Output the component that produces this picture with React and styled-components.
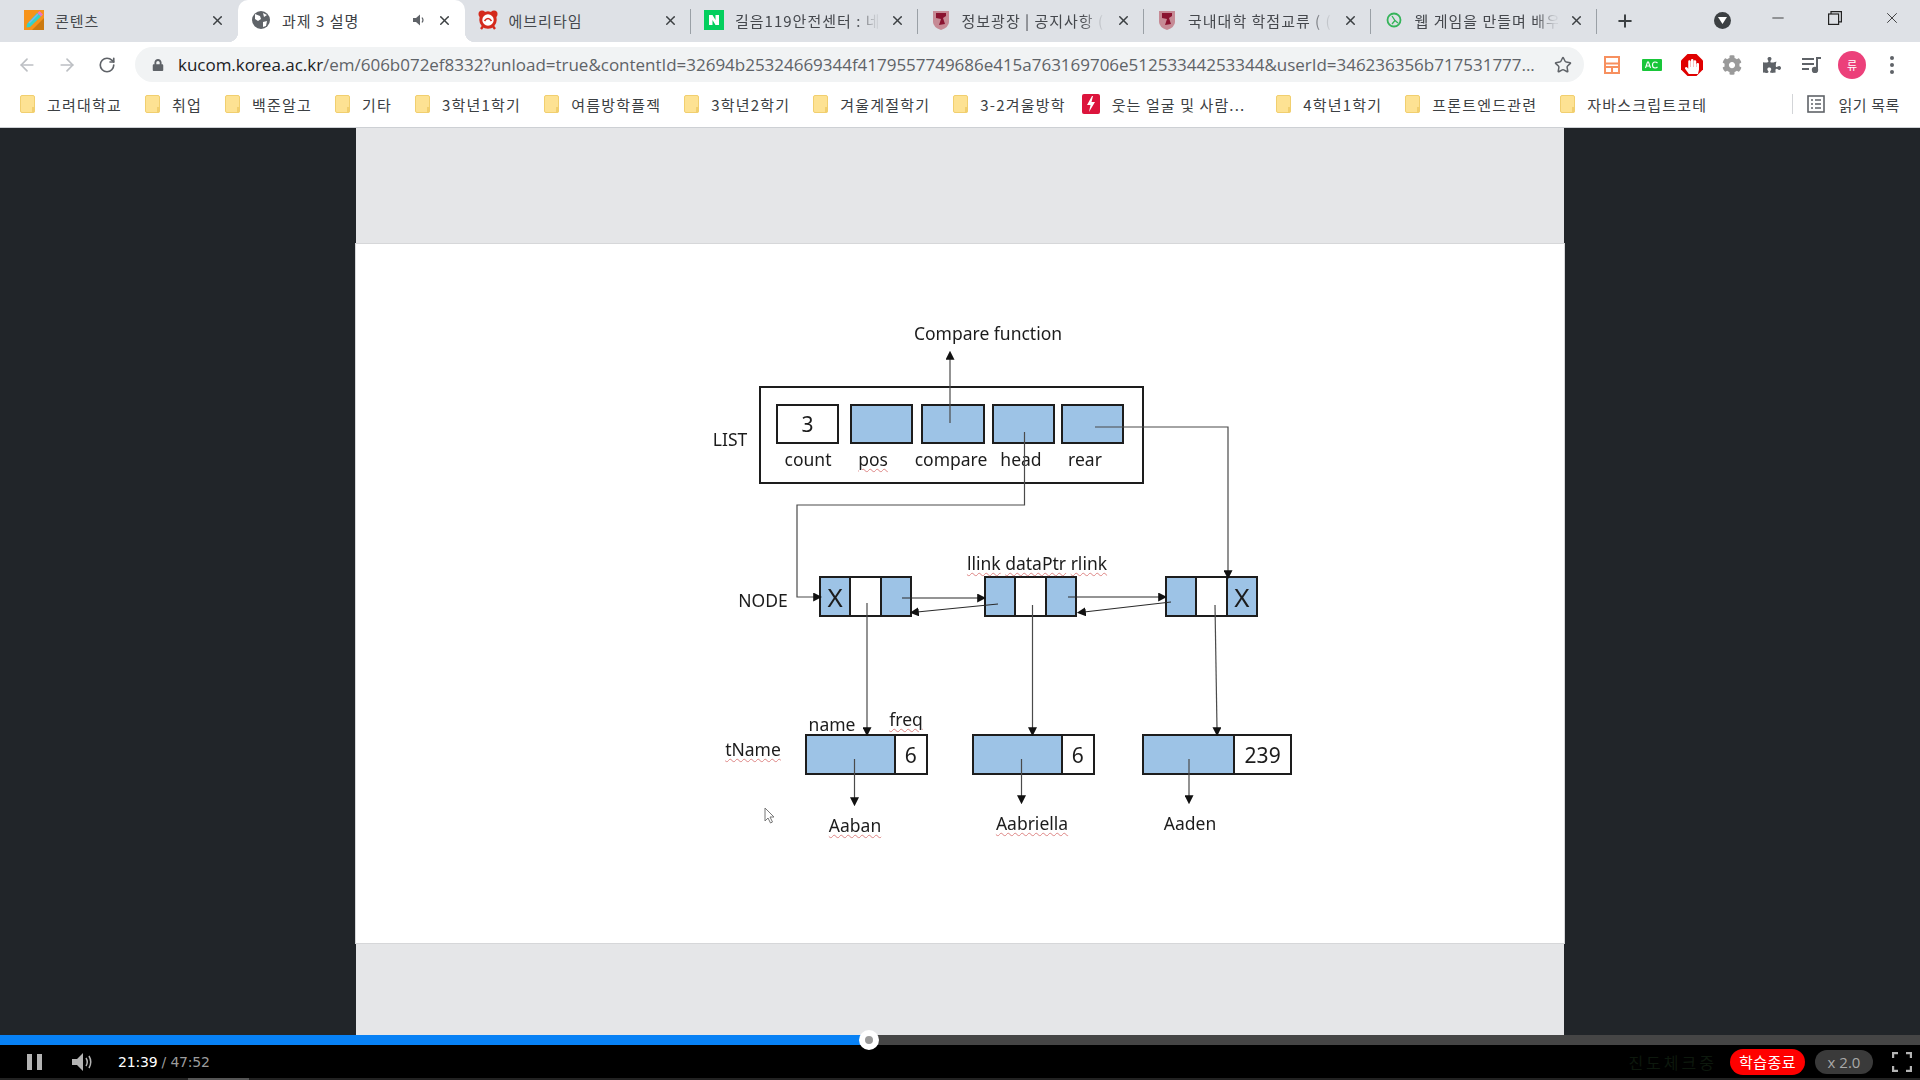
import React from 'react';
import styled, { createGlobalStyle } from 'styled-components';
import { ArrowLeft, ArrowRight, RotateCw, Star, X, Plus, Minus } from 'lucide-react';
import { FaLock, FaPuzzlePiece, FaCog, FaHandPaper } from 'react-icons/fa';

const SLIDE_X = 356;
const SLIDE_Y = 244;

const GlobalStyle = createGlobalStyle`
    html, body {
        margin: 0;
        padding: 0;
        background: #212529;
    }
    * {
        box-sizing: border-box;
    }
`;

const Page = styled.div`
    width: 1920px;
    height: 1080px;
    display: flex;
    flex-direction: column;
    overflow: hidden;
    font-family: "Noto Sans CJK KR", "Noto Sans", sans-serif;
`;

/* browser chrome */
const TabStrip = styled.div`
    height: 42px;
    flex: none;
    display: flex;
    align-items: stretch;
    padding-left: 11px;
    background: #dee1e6;
`;
const Tab = styled.div`
    position: relative;
    width: ${(p) => (p.$first ? 227 : 226.5)}px;
    display: flex;
    align-items: center;
    padding: 0 12px 2px 13px;
    gap: 11px;
    color: ${(p) => (p.$active ? '#3c4043' : '#45484d')};
    background: ${(p) => (p.$active ? '#fff' : 'transparent')};
    border-radius: ${(p) => (p.$active ? '10px 10px 0 0' : '0')};
    &::after {
        content: '';
        display: ${(p) => (p.$sep ? 'block' : 'none')};
        position: absolute;
        right: 0;
        top: 9px;
        width: 1px;
        height: 25px;
        background: #9aa0a6;
    }
    &::before {
        content: '';
        display: ${(p) => (p.$active ? 'block' : 'none')};
        position: absolute;
        left: -10px;
        right: -10px;
        bottom: 0;
        height: 10px;
        background:
            radial-gradient(circle at 0 0, #dee1e6 10px, #fff 10.5px) left / 10px 10px no-repeat,
            radial-gradient(circle at 100% 0, #dee1e6 10px, #fff 10.5px) right / 10px 10px no-repeat;
    }
`;
const Favicon = styled.span`
    width: 20px;
    height: 20px;
    flex: none;
    display: flex;
    align-items: center;
    justify-content: center;
`;
const TabTitle = styled.span`
    flex: 1;
    min-width: 0;
    overflow: hidden;
    white-space: nowrap;
    font-size: 15px;
    letter-spacing: 1px;
    mask-image: ${(p) => (p.$fade ? 'linear-gradient(to right, #000 84%, rgba(0,0,0,0.1) 98%)' : 'none')};
`;
const TabClose = styled.span`
    flex: none;
    display: flex;
    color: #3c4043;
    margin-right: 1px;
`;
const Speaker = styled.span`
    flex: none;
    display: flex;
`;
const NewTab = styled.span`
    margin-left: 18px;
    width: 20px;
    display: flex;
    align-items: center;
    color: #3c4043;
`;
const WindowControls = styled.div`
    margin-left: auto;
    display: flex;
    align-items: flex-start;
`;
const ProfileDot = styled.span`
    width: 17px;
    height: 17px;
    margin: 12px 18.5px 0 0;
    border-radius: 50%;
    background: #3c4043;
    display: flex;
    align-items: center;
    justify-content: center;
`;
const WindowButton = styled.span`
    width: 57px;
    height: 36px;
    display: flex;
    align-items: center;
    justify-content: center;
    color: #222;
`;

const Toolbar = styled.div`
    height: 45px;
    flex: none;
    display: flex;
    align-items: center;
    padding-left: 7px;
    background: #fff;
`;
const NavButton = styled.span`
    width: 40px;
    display: flex;
    justify-content: center;
    color: ${(p) => (p.$on ? '#5f6368' : '#bcbfc3')};
`;
const Omnibox = styled.div`
    width: 1449px;
    height: 35px;
    margin: 0 8px;
    display: flex;
    align-items: center;
    padding: 0 12px 0 17px;
    gap: 14px;
    border-radius: 18px;
    background: #f1f3f4;
    color: #5f6368;
`;
const Url = styled.div`
    flex: 1;
    min-width: 0;
    font-family: "Open Sans", sans-serif;
    font-size: 17px;
    letter-spacing: -0.02px;
    white-space: nowrap;
    overflow: hidden;
    color: #5f6368;
    b {
        font-weight: 400;
        color: #202124;
    }
`;
const ExtButton = styled.span`
    width: 40px;
    display: flex;
    justify-content: center;
    align-items: center;
    color: #5f6368;
`;
const Avatar = styled.span`
    width: 28px;
    height: 28px;
    border-radius: 50%;
    background: #ec407a;
    color: #fff;
    font-size: 11px;
    display: flex;
    align-items: center;
    justify-content: center;
`;

const BookmarkBar = styled.div`
    height: 41px;
    flex: none;
    display: flex;
    align-items: center;
    padding: 0 20px 6px;
    gap: 23px;
    background: #fff;
    border-bottom: 1px solid #cdd0d4;
`;
const Bookmark = styled.div`
    display: flex;
    align-items: center;
    gap: 12px;
    font-size: 15px;
    letter-spacing: 1.2px;
    color: #3c4043;
    white-space: nowrap;
`;
const AppBookmark = styled(Bookmark)`
    margin: 0 8px 0 -7px;
    letter-spacing: 1.1px;
`;
const ReadingList = styled(Bookmark)`
    margin-left: auto;
    height: 20px;
    gap: 13px;
    padding-left: 14px;
    border-left: 1px solid #d3d5d8;
    letter-spacing: 0.6px;
`;

/* player area */
const Stage = styled.div`
    flex: 1;
    min-height: 0;
    display: flex;
    justify-content: center;
    background: #212529;
`;
const Slide = styled.div`
    width: 1208px;
    display: flex;
    flex-direction: column;
    background: #e5e6e8;
`;
const SlideCanvas = styled.div`
    position: relative;
    height: 699px;
    margin-top: 116px;
    background: #fff;
    box-shadow: 0 0 0 1px #d6d7d9;
    color: #1c1c1c;
    font-family: "Noto Sans", sans-serif;
    font-size: 17.5px;
    filter: blur(0.3px);
`;
const Struct = styled.div`
    position: absolute;
    left: ${(p) => p.$x - SLIDE_X}px;
    top: ${(p) => p.$y - SLIDE_Y}px;
    width: ${(p) => p.$w}px;
    height: ${(p) => p.$h}px;
    display: flex;
    border: 2px solid #1d1d1d;
    background: #fff;
`;
const Frame = styled(Struct)`
    background: transparent;
`;
const Cell = styled.div`
    flex: ${(p) => p.$w} 0 0;
    display: flex;
    align-items: center;
    justify-content: center;
    font-size: ${(p) => p.$size || 21}px;
    background: ${(p) => (p.$blue ? '#9dc3e6' : '#fff')};
    & + & {
        border-left: 2px solid #1d1d1d;
    }
`;
const Label = styled.span`
    position: absolute;
    left: ${(p) => p.$x - SLIDE_X}px;
    top: ${(p) => p.$y - SLIDE_Y}px;
    transform: translate(-50%, -50%);
    white-space: nowrap;
    line-height: 1.2;
`;
const Spell = styled.span`
    text-decoration: underline wavy #dd8584 1px;
    text-underline-offset: 2px;
`;
const Wires = styled.svg`
    position: absolute;
    inset: 0;
    width: 100%;
    height: 100%;
    pointer-events: none;
`;
const Cursor = styled.svg`
    position: absolute;
    left: ${764 - SLIDE_X}px;
    top: ${807 - SLIDE_Y}px;
`;

const Progress = styled.div`
    position: relative;
    height: 10px;
    flex: none;
    background: #454545;
`;
const ProgressFill = styled.div`
    height: 100%;
    background: #0781f5;
`;
const Thumb = styled.span`
    position: absolute;
    top: -5px;
    width: 20px;
    height: 20px;
    margin-left: -10px;
    border: 6px solid #fff;
    border-radius: 50%;
    background: #9a9a9a;
`;
const Controls = styled.div`
    height: 33px;
    flex: none;
    display: flex;
    align-items: center;
    padding: 0 8px 0 27px;
    background: #000;
`;
const PauseBars = styled.span`
    display: flex;
    gap: 5px;
    i {
        width: 5px;
        height: 16px;
        background: #b4b4b4;
    }
`;
const VolumeIcon = styled.svg`
    margin-left: 30px;
`;
const TimeText = styled.span`
    margin-left: 24px;
    font-family: "DejaVu Sans", sans-serif;
    font-size: 14px;
    letter-spacing: -0.2px;
    color: #9c9c9c;
    b {
        font-weight: 400;
        color: #fff;
    }
`;
const GhostStatus = styled.span`
    margin-left: auto;
    font-size: 16px;
    letter-spacing: 3px;
    color: #0d180d;
`;
const FinishButton = styled.span`
    margin-left: 13px;
    width: 75px;
    height: 26px;
    border-radius: 13px;
    background: #f00;
    color: #fff;
    font-size: 15px;
    letter-spacing: 0.4px;
    display: flex;
    align-items: center;
    justify-content: center;
`;
const SpeedButton = styled.span`
    margin-left: 10px;
    width: 58px;
    height: 24px;
    border-radius: 12px;
    background: #3a3a3a;
    color: #a8a8a8;
    font-family: "Open Sans", sans-serif;
    font-size: 15px;
    display: flex;
    align-items: center;
    justify-content: center;
`;
const FullscreenIcon = styled.svg`
    margin-left: 19px;
    margin-right: 0;
`;
const BottomStrip = styled.div`
    height: 2px;
    flex: none;
    background: #222;
    padding-left: 188px;
    i {
        display: block;
        width: 61px;
        height: 2px;
        background: #555;
    }
`;

const PencilIcon = () => (
    <svg width="20" height="20" viewBox="0 0 20 20">
        <rect width="20" height="20" fill="#f7931a" />
        <path d="M0 20 L20 20 L20 8 L8 20Z" fill="#cc7a10" />
        <path d="M3 14 L13 3 L17 6.5 L6 17 L2.5 17.5Z" fill="#35d3c8" />
        <path d="M5 13 L14 4" stroke="#7ab6f5" strokeWidth="1.5" />
        <path d="M13.5 3 L15.5 1 L19 4.5 L17 6.5Z" fill="#e676c8" />
    </svg>
);
const GlobeIcon = () => (
    <svg width="18" height="18" viewBox="0 0 18 18">
        <circle cx="9" cy="9" r="9" fill="#5f6368" />
        <path d="M3 3 L8 5 L9 8 L6 10 L3 8Z M11 11 L15 10 L14 15 L11 16Z M11 2 L15 4 L12 6Z" fill="#fff" />
    </svg>
);
const AlarmIcon = () => (
    <svg width="20" height="20" viewBox="0 0 20 20">
        <circle cx="4" cy="4" r="3.5" fill="#d42a1c" />
        <circle cx="16" cy="4" r="3.5" fill="#d42a1c" />
        <path d="M3 19 L6 15 M17 19 L14 15" stroke="#d42a1c" strokeWidth="2.4" />
        <circle cx="10" cy="10" r="7.2" fill="#fff" stroke="#d42a1c" strokeWidth="3" />
        <path d="M6.5 11 Q10 6 13.5 11" fill="none" stroke="#d42a1c" strokeWidth="1.6" />
    </svg>
);
const NaverIcon = () => (
    <svg width="20" height="20" viewBox="0 0 20 20">
        <rect width="20" height="20" fill="#03cf5d" />
        <path d="M5 5 H8.5 L11.5 10 V5 H15 V15 H11.5 L8.5 10 V15 H5Z" fill="#fff" />
    </svg>
);
const CrestIcon = () => (
    <svg width="18" height="20" viewBox="0 0 18 20">
        <path d="M1 1 H17 V12 Q17 17 9 20 Q1 17 1 12Z" fill="#c68a95" />
        <path d="M4 3 H14 V6 L11 8 L13 14 L7 15 L9 9 L4 8Z" fill="#8a1330" />
    </svg>
);
const GameIcon = () => (
    <svg width="16" height="16" viewBox="0 0 16 16">
        <circle cx="8" cy="8" r="6.5" fill="none" stroke="#35b45a" strokeWidth="1.8" />
        <path d="M6 4 L9 8.5 L12 11 M6 12 L9 8.5" fill="none" stroke="#35b45a" strokeWidth="1.3" />
    </svg>
);
const FolderIcon = () => (
    <svg width="15" height="18" viewBox="0 0 15 18">
        <rect x="0.5" y="0.5" width="14" height="17" rx="1.5" fill="#fde293" stroke="#f1cf6f" />
        <path d="M12 12 h2.5 v5.5 h-2.5z" fill="#f1cf6f" />
    </svg>
);
const BoltIcon = () => (
    <svg width="18" height="20" viewBox="0 0 18 20">
        <rect width="18" height="20" rx="2" fill="#dc143c" />
        <path d="M10 2 L5 11 H8.5 L7 18 L13 8 H9.5 L11 2Z" fill="#fff" />
    </svg>
);
const LayoutIcon = () => (
    <svg width="16" height="18" viewBox="0 0 16 18">
        <rect x="1" y="1" width="14" height="16" fill="none" stroke="#f7905f" strokeWidth="2" />
        <path d="M1 7.5 H15 M1 11 H15 M8 11 V17" stroke="#f7905f" strokeWidth="2" />
    </svg>
);
const AcIcon = () => (
    <svg width="20" height="12" viewBox="0 0 20 12">
        <rect width="20" height="12" rx="1" fill="#18c639" />
        <path d="M3.5 9 L5.5 3 H6.5 L8.5 9 M4.5 7 H7.5 M15.5 4 Q14.5 3 13 3 Q10.5 3 10.5 6 Q10.5 9 13 9 Q14.5 9 15.5 8" fill="none" stroke="#fff" strokeWidth="1.1" />
    </svg>
);
const StopIcon = () => (
    <svg width="22" height="22" viewBox="0 0 22 22">
        <path d="M6.5 0 H15.5 L22 6.5 V15.5 L15.5 22 H6.5 L0 15.5 V6.5Z" fill="#e00000" />
        <foreignObject x="3" y="2" width="16" height="18">
            <FaHandPaper size={16} color="#fff" />
        </foreignObject>
    </svg>
);
const MediaListIcon = () => (
    <svg width="20" height="16" viewBox="0 0 20 16" fill="none" stroke="#5f6368" strokeWidth="2">
        <path d="M0 2 H12 M0 7 H12 M0 12 H7" />
        <path d="M15 13 V1 H19" />
        <circle cx="13" cy="13" r="2.2" fill="#5f6368" />
    </svg>
);
const DotsIcon = () => (
    <svg width="4" height="18" viewBox="0 0 4 18" fill="#5f6368">
        <circle cx="2" cy="2" r="2" />
        <circle cx="2" cy="9" r="2" />
        <circle cx="2" cy="16" r="2" />
    </svg>
);
const ReadingIcon = () => (
    <svg width="18" height="18" viewBox="0 0 18 18" fill="none" stroke="#5f6368">
        <rect x="1" y="1" width="16" height="16" strokeWidth="1.6" />
        <path d="M4 5 H6 M8 5 H14 M4 9 H6 M8 9 H14 M4 13 H6 M8 13 H14" strokeWidth="1.4" />
    </svg>
);
const RestoreIcon = () => (
    <svg width="14" height="14" viewBox="0 0 14 14" fill="none" stroke="#222" strokeWidth="1.2">
        <rect x="0.6" y="3" width="10" height="10.4" />
        <path d="M3 3 V0.6 H13.4 V10.8 H10.6" />
    </svg>
);

const tabs = [
    { title: '콘텐츠', icon: <PencilIcon />, first: true },
    { title: '과제 3 설명', icon: <GlobeIcon />, active: true, sound: true },
    { title: '에브리타임', icon: <AlarmIcon />, sep: true },
    { title: '길음119안전센터 : 네', icon: <NaverIcon />, sep: true, fade: true },
    { title: '정보광장 | 공지사항 (', icon: <CrestIcon />, sep: true, fade: true },
    { title: '국내대학 학점교류 ( (', icon: <CrestIcon />, sep: true, fade: true },
    { title: '웹 게임을 만들며 배우', icon: <GameIcon />, sep: true, fade: true },
];

const bookmarks = [
    '고려대학교', '취업', '백준알고', '기타', '3학년1학기', '여름방학플젝', '3학년2학기',
    '겨울계절학기', '3-2겨울방학', '웃는 얼굴 및 사람...', '4학년1학기', '프론트엔드관련', '자바스크립트코테',
];

const nodes = [
    { x: 819, cells: [true, false, true], mark: 0 },
    { x: 984, cells: [true, false, true] },
    { x: 1165, cells: [true, false, true], mark: 2 },
];

const records = [
    { x: 805, w: 123, split: 91, value: '6' },
    { x: 972, w: 123, split: 91, value: '6' },
    { x: 1142, w: 150, split: 93, value: '239' },
];

const labels = [
    { x: 988, y: 333, text: 'Compare function' },
    { x: 730, y: 439, text: 'LIST' },
    { x: 808, y: 459, text: 'count' },
    { x: 873, y: 459, text: 'pos', spell: true },
    { x: 951, y: 459, text: 'compare' },
    { x: 1021, y: 459, text: 'head' },
    { x: 1085, y: 459, text: 'rear' },
    { x: 763, y: 600, text: 'NODE' },
    { x: 832, y: 724, text: 'name' },
    { x: 906, y: 719, text: 'freq', spell: true },
    { x: 753, y: 749, text: 'tName', spell: true },
    { x: 855, y: 825, text: 'Aaban', spell: true },
    { x: 1032, y: 823, text: 'Aabriella', spell: true },
    { x: 1190, y: 823, text: 'Aaden' },
];

// thin connectors, in page coordinates
const grayWires = [
    'M1024.5 432 V505 H797 V597 H815',
    'M1095 427 H1228 V572',
    'M950 423 V358',
    'M867 603 V729',
    'M1032.5 605 V729',
    'M1215 605 L1217 729',
    'M854.5 759 V799',
    'M1021.5 759 V797',
    'M1189 759 V797',
];
const linkWires = [
    'M902 598 L979 598',
    'M998 604 L917 612',
    'M1068 597 L1160 597',
    'M1171 602 L1084 612',
];

function DiagramWires() {
    return (
        <Wires viewBox={`${SLIDE_X} ${SLIDE_Y} 1208 699`}>
            <defs>
                <marker id="head" viewBox="0 0 10 10" refX="2" refY="5" markerWidth="9" markerHeight="9" markerUnits="userSpaceOnUse" orient="auto">
                    <path d="M0 0 L10 5 L0 10Z" fill="#111" />
                </marker>
            </defs>
            {grayWires.map((d) => (
                <path key={d} d={d} fill="none" stroke="#4a4a4a" strokeWidth="1.2" markerEnd="url(#head)" />
            ))}
            {linkWires.map((d) => (
                <path key={d} d={d} fill="none" stroke="#2a2a2a" strokeWidth="1.2" markerEnd="url(#head)" />
            ))}
        </Wires>
    );
}

function Diagram() {
    return (
        <SlideCanvas>
            <Frame $x={759} $y={386} $w={385} $h={98} />
            <Struct $x={776} $y={404} $w={63} $h={40}><Cell $w={1}>3</Cell></Struct>
            <Struct $x={850} $y={404} $w={63} $h={40}><Cell $blue $w={1} /></Struct>
            <Struct $x={921} $y={404} $w={64} $h={40}><Cell $blue $w={1} /></Struct>
            <Struct $x={992} $y={404} $w={63} $h={40}><Cell $blue $w={1} /></Struct>
            <Struct $x={1061} $y={404} $w={63} $h={40}><Cell $blue $w={1} /></Struct>

            {nodes.map((n) => (
                <Struct key={n.x} $x={n.x} $y={576} $w={93} $h={41}>
                    {n.cells.map((blue, i) => (
                        <Cell key={i} $blue={blue} $w={1} $size={26}>{n.mark === i ? 'X' : ''}</Cell>
                    ))}
                </Struct>
            ))}

            {records.map((r) => (
                <Struct key={r.x} $x={r.x} $y={734} $w={r.w} $h={41}>
                    <Cell $blue $w={r.split} />
                    <Cell $w={r.w - r.split}>{r.value}</Cell>
                </Struct>
            ))}

            {labels.map((l) => (
                <Label key={l.text} $x={l.x} $y={l.y}>
                    {l.spell ? <Spell>{l.text}</Spell> : l.text}
                </Label>
            ))}
            <Label $x={1037} $y={563}>
                <Spell>llink</Spell> <Spell>dataPtr</Spell> <Spell>rlink</Spell>
            </Label>

            <DiagramWires />
            <Cursor width="11" height="17" viewBox="0 0 11 17">
                <path d="M1 1 V14 L4 11 L6.5 16 L8.5 15 L6 10 H10Z" fill="#fff" stroke="#777" />
            </Cursor>
        </SlideCanvas>
    );
}

export default function App() {
    return (
        <Page>
            <GlobalStyle />
            <TabStrip>
                {tabs.map((t) => (
                    <Tab key={t.title} $active={t.active} $sep={t.sep} $first={t.first}>
                        <Favicon>{t.icon}</Favicon>
                        <TabTitle $fade={t.fade}>{t.title}</TabTitle>
                        {t.sound && (
                            <Speaker>
                                <svg width="14" height="14" viewBox="0 0 14 14" fill="#5f6368">
                                    <path d="M1 5 H4 L8 1.5 V12.5 L4 9 H1Z" />
                                    <path d="M10 4.5 Q12 7 10 9.5" fill="none" stroke="#5f6368" strokeWidth="1.2" />
                                </svg>
                            </Speaker>
                        )}
                        <TabClose><X size={15} strokeWidth={2.4} /></TabClose>
                    </Tab>
                ))}
                <NewTab><Plus size={20} strokeWidth={2.4} /></NewTab>
                <WindowControls>
                    <ProfileDot>
                        <svg width="9" height="7" viewBox="0 0 9 7"><path d="M0 0 H9 L4.5 7Z" fill="#fff" /></svg>
                    </ProfileDot>
                    <WindowButton><Minus size={18} strokeWidth={1.1} /></WindowButton>
                    <WindowButton><RestoreIcon /></WindowButton>
                    <WindowButton><X size={18} strokeWidth={1.1} /></WindowButton>
                </WindowControls>
            </TabStrip>

            <Toolbar>
                <NavButton><ArrowLeft size={20} /></NavButton>
                <NavButton><ArrowRight size={20} /></NavButton>
                <NavButton $on><RotateCw size={18} strokeWidth={2.2} /></NavButton>
                <Omnibox>
                    <FaLock size={12} />
                    <Url>
                        <b>kucom.korea.ac.kr</b>/em/606b072ef8332?unload=true&amp;contentId=32694b25324669344f4179557749686e415a763169706e51253344253344&amp;userId=346236356b717531777...
                    </Url>
                    <Star size={18} strokeWidth={2} />
                </Omnibox>
                <ExtButton><LayoutIcon /></ExtButton>
                <ExtButton><AcIcon /></ExtButton>
                <ExtButton><StopIcon /></ExtButton>
                <ExtButton><FaCog size={20} color="#9a9a9a" /></ExtButton>
                <ExtButton><FaPuzzlePiece size={18} /></ExtButton>
                <ExtButton><MediaListIcon /></ExtButton>
                <ExtButton><Avatar>류</Avatar></ExtButton>
                <ExtButton><DotsIcon /></ExtButton>
            </Toolbar>

            <BookmarkBar>
                {bookmarks.map((b) => (
                    b.startsWith('웃는')
                        ? <AppBookmark key={b}><BoltIcon />{b}</AppBookmark>
                        : <Bookmark key={b}><FolderIcon />{b}</Bookmark>
                ))}
                <ReadingList><ReadingIcon />읽기 목록</ReadingList>
            </BookmarkBar>

            <Stage>
                <Slide>
                    <Diagram />
                </Slide>
            </Stage>

            <Progress>
                <ProgressFill style={{ width: `${(869 / 1920) * 100}%` }} />
                <Thumb style={{ left: `${(869 / 1920) * 100}%` }} />
            </Progress>
            <Controls>
                <PauseBars><i /><i /></PauseBars>
                <VolumeIcon width="22" height="18" viewBox="0 0 22 18">
                    <path d="M0 6 H5 L11 0 V18 L5 12 H0Z" fill="#b4b4b4" />
                    <path d="M14 5 Q16.5 9 14 13 M17 3 Q20.5 9 17 15" fill="none" stroke="#b4b4b4" strokeWidth="1.5" />
                </VolumeIcon>
                <TimeText><b>21:39</b> / 47:52</TimeText>
                <GhostStatus>진도체크중</GhostStatus>
                <FinishButton>학습종료</FinishButton>
                <SpeedButton>x 2.0</SpeedButton>
                <FullscreenIcon width="20" height="20" viewBox="0 0 20 20" fill="none" stroke="#b4b4b4" strokeWidth="2.4">
                    <path d="M1 6 V1 H6 M14 1 H19 V6 M19 14 V19 H14 M6 19 H1 V14" />
                </FullscreenIcon>
            </Controls>
            <BottomStrip><i /></BottomStrip>
        </Page>
    );
}
